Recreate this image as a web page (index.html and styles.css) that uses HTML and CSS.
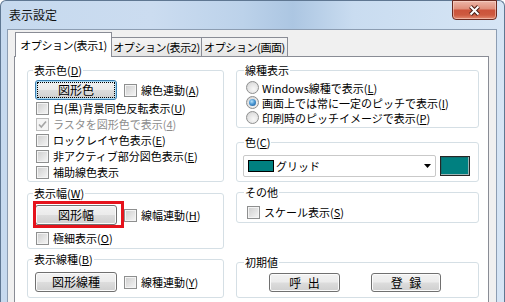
FILE: index.html
```html
<!DOCTYPE html>
<html lang="ja">
<head>
    <meta charset="UTF-8">
    <meta name="viewport" content="width=device-width, initial-scale=1.0">
    <title>表示設定</title>
    <link rel="stylesheet" href="styles.css">
</head>
<body>
    <div class="window">
        <div class="titlebar">
            <span class="title">表示設定</span>
            <button class="close-btn" aria-label="閉じる">
                <svg width="13" height="11" viewBox="0 0 13 11">
                    <path d="M2.5 1.5 L10.5 9.5 M10.5 1.5 L2.5 9.5" stroke="#4a1e16" stroke-width="4"/>
                    <path d="M2.5 1.5 L10.5 9.5 M10.5 1.5 L2.5 9.5" stroke="#fff" stroke-width="2"/>
                </svg>
            </button>
        </div>

        <div class="client">
            <div class="tabs">
                <div class="tab tab-1 active">オプション(表示1)</div>
                <div class="tab tab-2">オプション(表示2)</div>
                <div class="tab tab-3">オプション(画面)</div>
            </div>

            <div class="pane">
                <!-- left column -->
                <div class="col col-left">
                    <fieldset class="group g-disp-color">
                        <legend>表示色(<u>D</u>)</legend>
                        <div class="btn-row">
                            <button class="btn btn-shape focused"><span class="focus-ring">図形色</span></button>
                            <label class="check inline"><span class="box"></span><span>線色連動(<u>A</u>)</span></label>
                        </div>
                        <label class="check"><span class="box"></span><span>白(黒)背景同色反転表示(<u>U</u>)</span></label>
                        <label class="check disabled">
                            <span class="box">
                                <svg width="11" height="11" viewBox="0 0 11 11"><path d="M2 5.5 L4.3 8 L9 2.5" fill="none" stroke="#a4a4a4" stroke-width="1.6"/></svg>
                            </span><span>ラスタを図形色で表示(<u>4</u>)</span>
                        </label>
                        <label class="check"><span class="box"></span><span>ロックレイヤ色表示(<u>E</u>)</span></label>
                        <label class="check"><span class="box"></span><span>非アクティブ部分図色表示(<u>E</u>)</span></label>
                        <label class="check"><span class="box"></span><span>補助線色表示</span></label>
                    </fieldset>

                    <fieldset class="group g-disp-width">
                        <legend>表示幅(<u>W</u>)</legend>
                        <div class="btn-row">
                            <span class="marked"><button class="btn btn-shape">図形幅</button></span>
                            <label class="check inline"><span class="box"></span><span>線幅連動(<u>H</u>)</span></label>
                        </div>
                        <label class="check"><span class="box"></span><span>極細表示(<u>O</u>)</span></label>
                    </fieldset>

                    <fieldset class="group g-disp-line">
                        <legend>表示線種(<u>B</u>)</legend>
                        <div class="btn-row">
                            <button class="btn btn-shape">図形線種</button>
                            <label class="check inline"><span class="box"></span><span>線種連動(<u>Y</u>)</span></label>
                        </div>
                    </fieldset>
                </div>

                <!-- right column -->
                <div class="col col-right">
                    <fieldset class="group g-linetype">
                        <legend>線種表示</legend>
                        <label class="radio"><span class="dot"></span><span>Windows線種で表示(<u>L</u>)</span></label>
                        <label class="radio checked"><span class="dot"></span><span>画面上では常に一定のピッチで表示(<u>I</u>)</span></label>
                        <label class="radio"><span class="dot"></span><span>印刷時のピッチイメージで表示(<u>P</u>)</span></label>
                    </fieldset>

                    <fieldset class="group g-color">
                        <legend>色(<u>C</u>)</legend>
                        <div class="color-row">
                            <div class="combo">
                                <span class="swatch"></span>
                                <span class="combo-text">グリッド</span>
                                <svg class="combo-arrow" width="7" height="4" viewBox="0 0 7 4"><path d="M0 0 H7 L3.5 4 Z" fill="#000"/></svg>
                            </div>
                            <button class="color-btn" aria-label="色"></button>
                        </div>
                    </fieldset>

                    <fieldset class="group g-other">
                        <legend>その他</legend>
                        <label class="check"><span class="box"></span><span>スケール表示(<u>S</u>)</span></label>
                    </fieldset>

                    <fieldset class="group g-default">
                        <legend>初期値</legend>
                        <div class="default-row">
                            <button class="btn btn-call">呼 出</button>
                            <button class="btn btn-save">登 録</button>
                        </div>
                    </fieldset>
                </div>
            </div>
        </div>
    </div>
</body>
</html>
```

FILE: styles.css
```css
body {
    margin: 0;
    width: 505px;
    height: 302px;
    overflow: hidden;
    background-color: #fff;
    font-family: "Noto Sans CJK JP", sans-serif;
    font-size: 11px;
    color: #000;
}
u {
    text-decoration-thickness: 1px;
    text-underline-offset: 1px;
}

/* window frame */
.window {
    height: 330px;
    box-sizing: border-box;
    border: 1px solid #5f7792;
    border-bottom: none;
    border-radius: 6px 6px 0 0;
    padding: 0 7px 0 6px;
    background: linear-gradient(to right, #c6d9ee 0%, #cbdcf0 30%, #bcd2ea 48%, #acc6e2 58%, #c9dcf0 70%, #d6e5f5 100%);
}
.titlebar {
    height: 28px;
    display: flex;
    justify-content: space-between;
    align-items: flex-start;
}
.title {
    padding: 7px 0 0 2px;
    line-height: 14px;
    font-size: 12px;
    color: #111;
}
.close-btn {
    width: 45px;
    height: 20px;
    margin-top: -1px;
    padding: 0;
    display: flex;
    align-items: center;
    justify-content: center;
    border: 1px solid #6a2a20;
    border-radius: 0 0 4px 4px;
    background: linear-gradient(#ecb6a8 0%, #e0907c 42%, #cc533b 52%, #cd5a40 78%, #e48b72 100%);
    box-shadow: inset 0 0 0 1px rgba(255, 225, 215, 0.5);
}

/* client area */
.client {
    height: 320px;
    border: 1px solid #8c9db2;
    background-color: #f0f0f0;
    padding: 0 7px 0 6px;
}
.tabs {
    display: flex;
    align-items: flex-end;
    height: 26px;
    padding-left: 1px;
}
.tab {
    box-sizing: border-box;
    height: 19px;
    margin-left: -1px;
    padding-top: 1px;
    line-height: 17px;
    text-align: center;
    white-space: nowrap;
    letter-spacing: -0.4px;
    border: 1px solid #898c95;
    border-bottom: none;
    background: linear-gradient(#f4f4f4, #e6e6e6);
}
.tab.active {
    height: 25px;
    margin-left: 0;
    margin-bottom: -1px;
    padding-top: 4px;
    position: relative;
    z-index: 1;
    background: #fff;
}
.tab-1 { width: 97px; }
.tab-2 { width: 91px; }
.tab-3 { width: 87px; }

.pane {
    height: 260px;
    border: 1px solid #898c95;
    background-color: #fff;
    padding: 6px 8px 0 12px;
    display: grid;
    grid-template-columns: 197px 243px;
    column-gap: 12px;
    align-content: start;
}
.col {
    display: flex;
    flex-direction: column;
}

/* group boxes */
.group {
    margin: 0;
    min-width: 0;
    border: 1px solid #d5dfe5;
    border-radius: 3px;
}
.group legend {
    padding: 0 1px;
    line-height: 14px;
}
.col-left .group {
    padding: 3px 4px 1px 8px;
}
.col-left .group legend {
    margin-left: -3px;
}
.col-right .group {
    padding: 3px 4px 2px 6px;
}
.col-right .group legend {
    margin-left: 1px;
}
.g-disp-width {
    margin-top: 4px;
    padding-top: 5px !important;
    padding-bottom: 2px !important;
}
.g-disp-width .btn-row {
    margin-bottom: 5px;
}
.g-disp-line {
    margin-top: 3px;
    padding-top: 6px !important;
    padding-bottom: 5px !important;
}
.g-color {
    margin-top: 7px;
    padding-top: 6px !important;
    padding-bottom: 4px !important;
}
.g-other {
    margin-top: 3px;
    padding-top: 5px !important;
}
.g-default {
    margin-top: auto;
    padding-top: 4px !important;
    padding-bottom: 5px !important;
}

/* buttons */
.btn-row {
    display: flex;
    align-items: center;
    height: 20px;
}
.btn {
    box-sizing: border-box;
    height: 20px;
    padding: 0;
    font-family: inherit;
    font-size: 12px;
    line-height: 16px;
    color: #000;
    border: 1px solid #707070;
    border-radius: 3px;
    background: linear-gradient(#f2f2f2 0%, #ebebeb 49%, #dddddd 51%, #cfcfcf 100%);
    box-shadow: inset 0 0 0 1px #fbfbfb;
}
.btn-shape {
    width: 82px;
    margin-left: -1px;
}
.btn.focused {
    border-color: #3c7fb1;
    box-shadow: inset 0 0 0 1px #a9dbf6;
    padding: 2px;
}
.focus-ring {
    display: block;
    height: 14px;
    line-height: 14px;
    outline: 1px dotted #000;
    outline-offset: 0;
}
.marked {
    position: relative;
    display: inline-flex;
}
.marked::after {
    content: "";
    position: absolute;
    left: -3px;
    right: -7px;
    top: -4px;
    bottom: -3px;
    border: 3px solid #e5131c;
}

/* checkboxes and radios */
.check, .radio {
    display: flex;
    align-items: center;
    height: 16px;
    gap: 4px;
    white-space: nowrap;
}
.check.inline {
    margin-left: 7px;
}
.box {
    box-sizing: border-box;
    width: 13px;
    height: 13px;
    flex: none;
    display: flex;
    align-items: center;
    justify-content: center;
    border: 1px solid #8e8f8f;
    background: linear-gradient(135deg, #cdcdcd, #f6f6f6);
    box-shadow: inset 0 0 0 1px #f4f4f4;
}
.check.disabled {
    color: #8d8d8d;
}
.check.disabled .box {
    border-color: #bcbcbc;
    background: #f4f4f4;
    box-shadow: none;
}
.col-right .check {
    padding-left: 4px;
}
.radio {
    height: 15px;
    gap: 3px;
    padding-left: 3px;
}
.dot {
    box-sizing: border-box;
    width: 13px;
    height: 13px;
    flex: none;
    border-radius: 50%;
    border: 1px solid #8e8f8f;
    background: radial-gradient(circle at 60% 65%, #f8f8f8 0%, #e4e4e4 55%, #c9c9c9 100%);
    display: flex;
    align-items: center;
    justify-content: center;
}
.radio.checked .dot::after {
    content: "";
    width: 7px;
    height: 7px;
    border-radius: 50%;
    background: radial-gradient(circle at 40% 35%, #b8e2fb 0%, #4a98d4 45%, #1a4f8c 100%);
}

/* colour selection */
.color-row {
    display: flex;
    align-items: center;
    height: 22px;
}
.combo {
    box-sizing: border-box;
    width: 193px;
    height: 22px;
    display: flex;
    align-items: center;
    border: 1px solid #c9c9c9;
    border-radius: 2px;
    background-color: #fff;
    padding: 0 3px 0 4px;
}
.swatch {
    box-sizing: border-box;
    width: 26px;
    height: 12px;
    border: 1px solid #000;
    background-color: #008080;
}
.combo-text {
    margin-left: 2px;
    flex: 1;
    line-height: 14px;
}
.combo-arrow {
    margin-right: 1px;
}
.color-btn {
    box-sizing: border-box;
    width: 30px;
    height: 20px;
    margin-left: 4px;
    padding: 0;
    border: 1px solid #262626;
    background-color: #008080;
    box-shadow: inset -1px -1px 0 #9bb5b5, inset 1px 1px 0 #0d6f6f;
}

/* default values */
.default-row {
    display: flex;
    height: 19px;
}
.default-row .btn {
    height: 19px;
    word-spacing: 4px;
}
.btn-call {
    width: 71px;
    margin-left: 26px;
}
.btn-save {
    width: 70px;
    margin-left: 31px;
}
```
